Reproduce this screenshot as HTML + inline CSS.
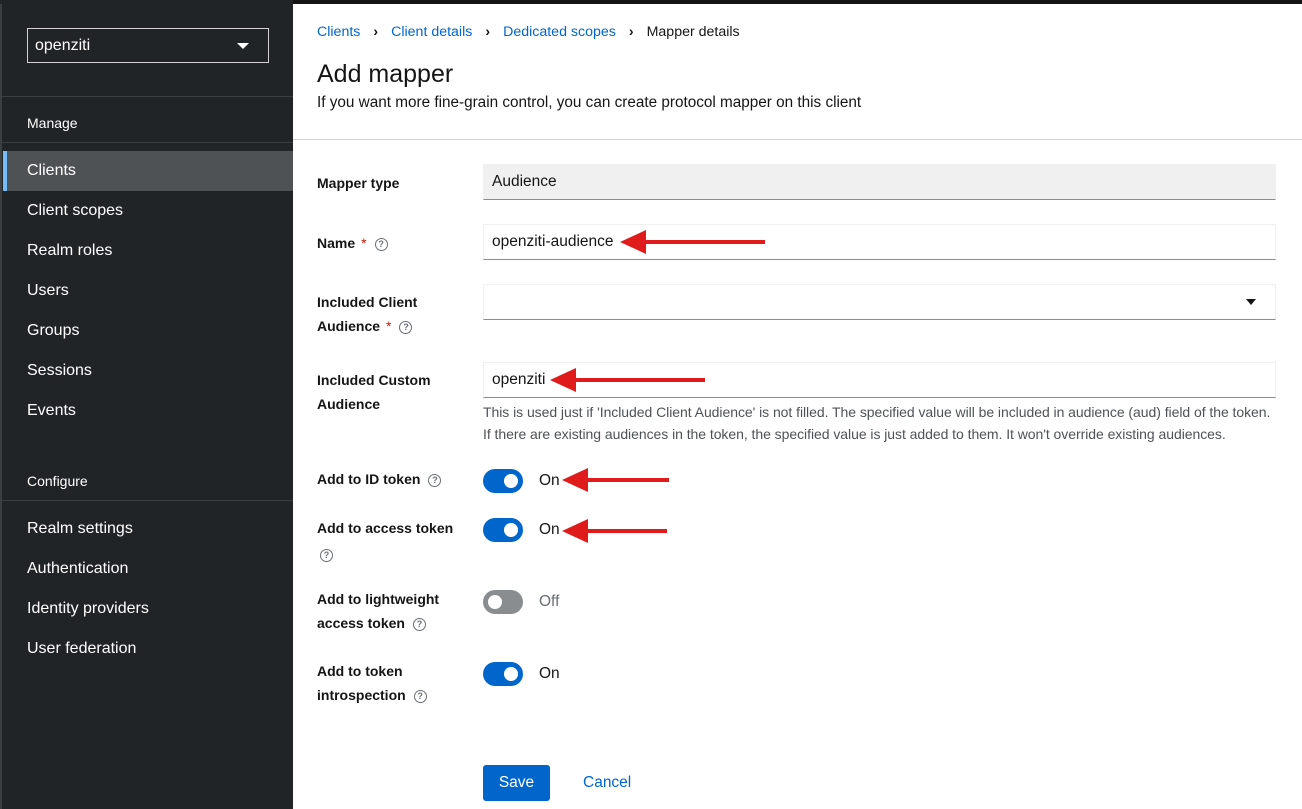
<!DOCTYPE html><html><head><style>
*{box-sizing:border-box;margin:0;padding:0}
body{width:1302px;height:809px;position:relative;overflow:hidden;font-family:"Liberation Sans",sans-serif;background:#fff;color:#151515}
.a{position:absolute;white-space:nowrap}
#sb{position:absolute;left:0;top:0;width:293px;height:809px;background:#212427}
.nav{position:absolute;left:27px;color:#fff;font-size:16px}
.lbl{position:absolute;left:317px;font-size:14px;font-weight:bold;color:#151515}
.inp{position:absolute;left:483px;width:793px;height:36px;border:1px solid #f0f0f0;border-bottom:1px solid #8a8d90;font-size:15.5px;padding:8px 8px}
.req{color:#c9190b;font-weight:normal;margin-left:6px}
.hi{display:inline-block;width:13px;height:13px;border:1.5px solid #6a6e73;border-radius:50%;font-size:9px;line-height:10px;text-align:center;color:#6a6e73;font-weight:bold;vertical-align:middle;margin-left:8px}
.tg{position:absolute;left:483px;width:40px;height:24px;border-radius:12px;background:#0066cc}
.tg::after{content:"";position:absolute;top:5px;left:21px;width:14px;height:14px;border-radius:50%;background:#fff}
.tg.off{background:#8a8d90}.tg.off::after{left:5px}
.st{position:absolute;left:539px;font-size:15.5px}
.ch{color:#151515;margin:0 13px;font-weight:bold}
</style></head><body>
<div class="a" style="left:0;top:0;width:1302px;height:4px;background:#151515"></div>
<div id="sb">
<div class="a" style="left:0;top:4px;width:2px;height:805px;background:#3c3f42"></div>
<div class="a" style="left:27px;top:28px;width:242px;height:35px;border:1px solid #d2d2d2;color:#fff;font-size:16px;padding:8px 7px">openziti<span style="position:absolute;right:19px;top:14px;border:6px solid transparent;border-top:6px solid #fff;border-bottom:0"></span></div>
<div class="a" style="left:2px;top:96px;width:291px;height:1px;background:#3c3f42"></div>
<div class="a" style="left:27px;top:115px;color:#fff;font-size:14px">Manage</div>
<div class="a" style="left:2px;top:142px;width:291px;height:1px;background:#3c3f42"></div>
<div class="a" style="left:3px;top:151px;width:290px;height:40px;background:#4f5255;border-left:4px solid #73bcf7"></div>
<div class="nav" style="top:162px">Clients</div>
<div class="nav" style="top:202px">Client scopes</div>
<div class="nav" style="top:242px">Realm roles</div>
<div class="nav" style="top:282px">Users</div>
<div class="nav" style="top:322px">Groups</div>
<div class="nav" style="top:362px">Sessions</div>
<div class="nav" style="top:402px">Events</div>
<div class="a" style="left:27px;top:473px;color:#fff;font-size:14px">Configure</div>
<div class="a" style="left:2px;top:500px;width:291px;height:1px;background:#3c3f42"></div>
<div class="nav" style="top:520px">Realm settings</div>
<div class="nav" style="top:560px">Authentication</div>
<div class="nav" style="top:600px">Identity providers</div>
<div class="nav" style="top:640px">User federation</div>
</div>
<div class="a" style="left:317px;top:24px;font-size:14.2px;color:#0066cc">Clients<span class="ch">›</span>Client details<span class="ch">›</span>Dedicated scopes<span class="ch">›</span><span style="color:#151515">Mapper details</span></div>
<div class="a" style="left:317px;top:60px;font-size:25px">Add mapper</div>
<div class="a" style="left:317px;top:94px;font-size:15.3px">If you want more fine-grain control, you can create protocol mapper on this client</div>
<div class="a" style="left:293px;top:139px;width:1009px;height:1px;background:#d2d2d2"></div>
<div class="lbl" style="top:175px">Mapper type</div>
<div class="inp" style="top:164px;background:#f0f0f0">Audience</div>
<div class="lbl" style="top:235px">Name<span class="req">*</span><span class="hi">?</span></div>
<div class="inp" style="top:224px">openziti-audience</div>
<div class="lbl" style="top:290px;line-height:24px">Included Client<br>Audience<span class="req">*</span><span class="hi">?</span></div>
<div class="inp" style="top:284px"><span style="position:absolute;right:19px;top:14px;border:5px solid transparent;border-top:6px solid #151515;border-bottom:0"></span></div>
<div class="lbl" style="top:368px;line-height:24px">Included Custom<br>Audience</div>
<div class="inp" style="top:362px">openziti</div>
<div class="a" style="left:483px;top:401px;font-size:14px;line-height:22px;color:#4f5255;letter-spacing:-0.05px">This is used just if 'Included Client Audience' is not filled. The specified value will be included in audience (aud) field of the token.<br>If there are existing audiences in the token, the specified value is just added to them. It won't override existing audiences.</div>
<div class="lbl" style="top:471px">Add to ID token<span class="hi">?</span></div>
<div class="tg" style="top:469px"></div><div class="st" style="top:472px">On</div>
<div class="lbl" style="top:515px;line-height:26px">Add to access token<br><span class="hi" style="margin-left:3px">?</span></div>
<div class="tg" style="top:518px"></div><div class="st" style="top:521px">On</div>
<div class="lbl" style="top:587px;line-height:24px">Add to lightweight<br>access token<span class="hi">?</span></div>
<div class="tg off" style="top:590px"></div><div class="st" style="top:593px;color:#6a6e73">Off</div>
<div class="lbl" style="top:659px;line-height:24px">Add to token<br>introspection<span class="hi">?</span></div>
<div class="tg" style="top:662px"></div><div class="st" style="top:665px">On</div>
<div class="a" style="left:483px;top:765px;width:67px;height:36px;background:#0066cc;border-radius:3px;color:#fff;font-size:15.5px;text-align:center;line-height:36px">Save</div>
<div class="a" style="left:583px;top:774px;font-size:15.5px;color:#0066cc">Cancel</div>
<svg class="a" style="left:0;top:0" width="1302" height="809">
<g fill="#e01b1b" stroke="#e01b1b" stroke-width="4">
<line x1="640" y1="242" x2="765" y2="242"/><polygon stroke="none" points="620,242 646,230 646,254"/>
<line x1="570" y1="380" x2="705" y2="380"/><polygon stroke="none" points="550,380 576,368 576,392"/>
<line x1="580" y1="480" x2="669" y2="480"/><polygon stroke="none" points="562,480 588,468 588,492"/>
<line x1="580" y1="531" x2="667" y2="531"/><polygon stroke="none" points="562,531 588,519 588,543"/>
</g></svg>
</body></html>
